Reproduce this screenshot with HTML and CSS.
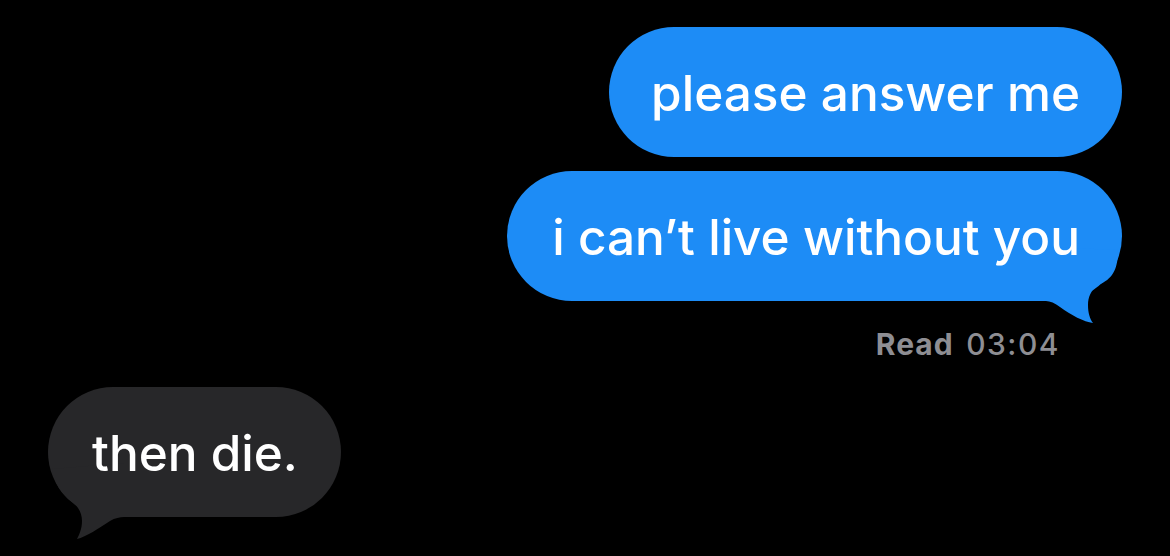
FILE: index.html
```html
<!DOCTYPE html>
<html lang="en">
<head>
<meta charset="utf-8">
<title>Messages</title>
<link rel="stylesheet" href="styles.css">
</head>
<body>
<main class="thread">
  <div class="bubble out"><span class="text">please answer me</span></div>
  <div class="bubble out">
    <svg class="tail tail-out" width="80" height="80" viewBox="0 0 80 80"><path d="M0 0 L72 3 C72 20 68 32 52 38 C45 43 42 50 42 58 C42 66 44 72 47 76 C38 75 25 68 14 60 C9 56 4 54 0 54 Z"/></svg>
    <span class="text">i can’t live without you</span>
  </div>
  <div class="receipt"><b>Read</b> <span>03:04</span></div>
  <div class="bubble in">
    <svg class="tail tail-in" width="80" height="80" viewBox="0 0 80 80"><path d="M80 0 L8 6 C10 20 18 32 28 39 C35 44 38 51 38 58 C38 66 35 72 33 76 C42 74 55 65 66 58 C71 55 76 54 80 54 Z"/></svg>
    <span class="text">then die.</span>
  </div>
</main>
</body>
</html>
```
FILE: styles.css
```css
html, body {
  margin: 0;
  padding: 0;
  background: #000;
}
body {
  width: 1170px;
  height: 556px;
  overflow: hidden;
  font-family: Inter, "Liberation Sans", Arial, sans-serif;
}
.thread {
  display: flex;
  flex-direction: column;
  padding: 27px 48px 0;
}
.bubble {
  position: relative;
  box-sizing: border-box;
  height: 130px;
  padding: 37px 42px 35px 45px;
  border-radius: 65px;
  font-size: 49.5px;
  font-weight: 500;
  line-height: 58px;
  color: #fff;
  white-space: nowrap;
}
.text {
  position: relative;
}
.bubble.out {
  align-self: flex-end;
  background: #1d8cf6;
}
.bubble.out:first-child {
  padding-left: 42px;
}
.bubble.out + .bubble.out {
  margin-top: 14px;
}
.bubble.in {
  align-self: flex-start;
  background: #272729;
  padding-left: 44px;
  padding-right: 43px;
  margin-top: 25px;
}
.tail {
  position: absolute;
  bottom: -26px;
}
.tail-out {
  right: -4px;
  fill: #1d8cf6;
}
.tail-in {
  left: -4px;
  fill: #272729;
}
.receipt {
  align-self: flex-end;
  margin-top: 25px;
  margin-right: 62px;
  font-family: Inter, "Liberation Sans", Arial, sans-serif;
  font-size: 30px;
  line-height: 36px;
  font-weight: 500;
  color: #8e8e93;
  letter-spacing: 1.5px;
}
.receipt b {
  font-weight: 700;
  letter-spacing: 1px;
  margin-right: 3px;
}
```
